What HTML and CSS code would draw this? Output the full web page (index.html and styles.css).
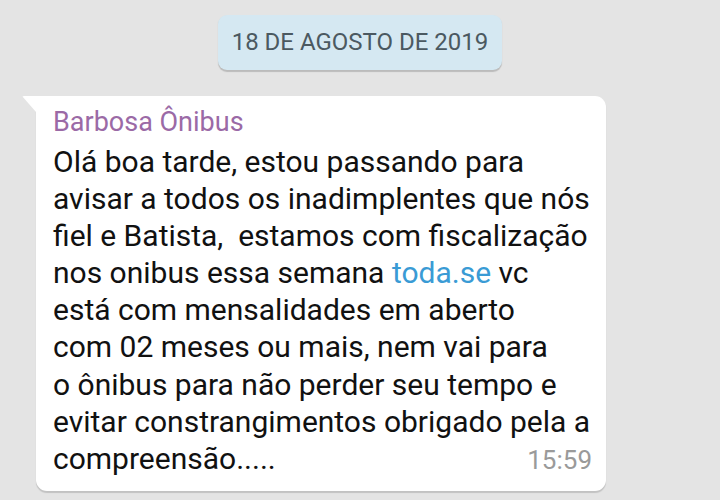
FILE: index.html
```html
<!DOCTYPE html>
<html lang="pt">
<head>
<meta charset="utf-8">
<link rel="stylesheet" href="styles.css">
</head>
<body>
<div class="chat">
  <div class="date-row"><div class="date">18 DE AGOSTO DE 2019</div></div>
  <div class="bubble">
    <div class="name">Barbosa Ônibus</div>
    <div class="text">
      <div>Olá boa tarde, estou passando para</div>
      <div>avisar a todos os inadimplentes que nós</div>
      <div>fiel e Batista,&nbsp; estamos com fiscalização</div>
      <div>nos onibus essa semana <span class="link">toda.se</span> vc</div>
      <div>está com mensalidades em aberto</div>
      <div>com 02 meses ou mais, nem vai para</div>
      <div>o ônibus para não perder seu tempo e</div>
      <div>evitar constrangimentos obrigado pela a</div>
      <div class="last"><span>compreensão.....</span><span class="time">15:59</span></div>
    </div>
  </div>
</div>
</body>
</html>
```
FILE: styles.css
```css
html, body {
  margin: 0;
  padding: 0;
  background: #e4e4e4;
  width: 720px;
  height: 500px;
  overflow: hidden;
  font-family: Roboto, "Noto Sans", sans-serif;
}
.chat {
  display: flex;
  flex-direction: column;
  padding-top: 15px;
}
.date-row {
  display: flex;
  justify-content: center;
}
.date {
  background: #d5e8f2;
  color: #4b5961;
  font-size: 24px;
  height: 55px;
  line-height: 55px;
  padding: 0 14px;
  border-radius: 9px;
  box-shadow: 0 1.5px 1px rgba(0,0,0,0.18);
}
.bubble {
  position: relative;
  margin-top: 26px;
  margin-left: 36px;
  width: 570px;
  box-sizing: border-box;
  background: #ffffff;
  border-radius: 0 11px 11px 11px;
  padding: 8px 14px 12px 17px;
  box-shadow: 0 1.5px 1px rgba(0,0,0,0.15);
}
.bubble::before {
  content: "";
  position: absolute;
  left: -14px;
  top: 0;
  width: 14px;
  height: 16px;
  background: #ffffff;
  clip-path: polygon(0 0, 100% 0, 100% 100%);
  border-top-left-radius: 2px;
}
.name {
  color: #9b6aa6;
  font-size: 27px;
  line-height: 36px;
  margin-bottom: 3px;
}
.text {
  color: #111111;
  font-size: 30px;
  line-height: 37.1px;
  white-space: nowrap;
}
.link {
  color: #3a9bd5;
}
.last {
  display: flex;
  justify-content: space-between;
  align-items: baseline;
}
.time {
  color: #9a9a9a;
  font-size: 26px;
}
```
